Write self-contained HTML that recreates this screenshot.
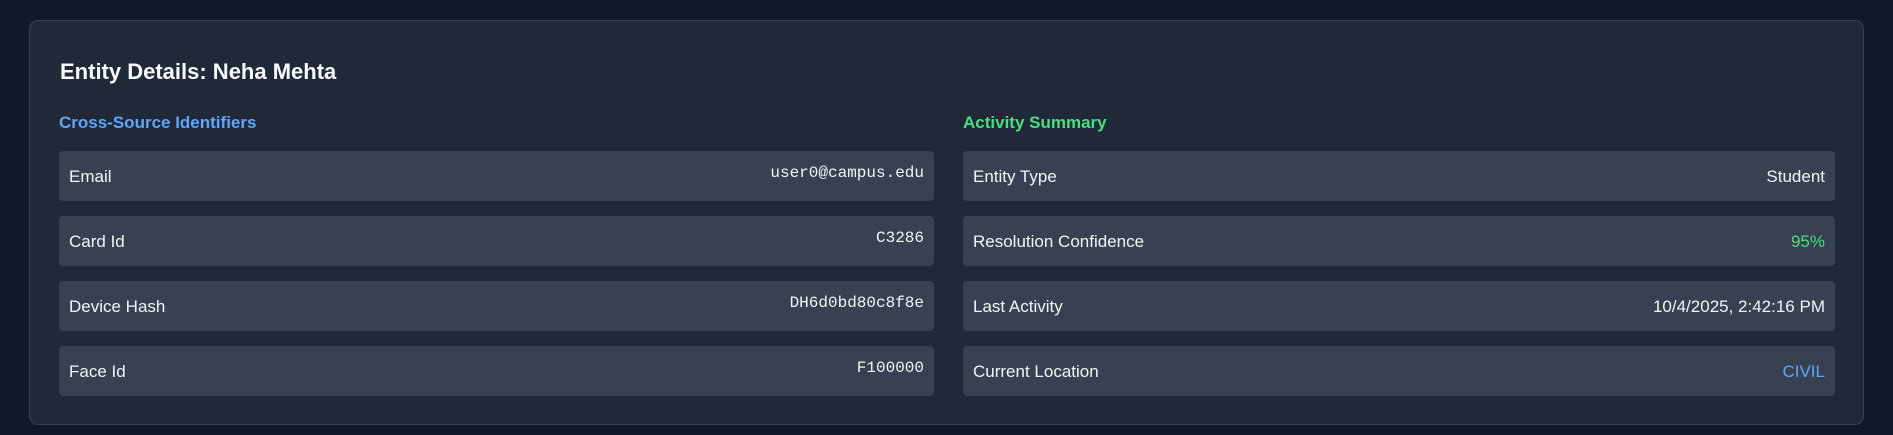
<!DOCTYPE html>
<html><head><meta charset="utf-8"><style>
html,body{margin:0;padding:0;}
body{width:1893px;height:435px;background:#111827;font-family:"Liberation Sans",sans-serif;color:#f3f4f6;position:relative;overflow:hidden;}
.card{position:absolute;left:29px;top:20px;width:1835px;height:405px;background:#1f2937;border:1px solid #374151;border-radius:9px;box-sizing:border-box;}
h1{position:absolute;left:30px;top:38px;margin:0;font-size:22px;font-weight:bold;color:#f9fafb;}
.col{position:absolute;top:91px;}
.col h2{margin:0;font-size:17px;font-weight:bold;height:39px;line-height:22px;}
.row{height:50px;background:#374151;border-radius:4px;margin-bottom:15px;display:flex;justify-content:space-between;align-items:center;padding:2px 10px 0;box-sizing:border-box;font-size:17px;}
.mono{font-family:"Liberation Mono",monospace;font-size:16px;position:relative;top:-4px;}
</style></head><body>
<div class="card">
<h1>Entity Details: Neha Mehta</h1>
<div class="col" style="left:29px;width:875px;">
<h2 style="color:#60a5fa">Cross-Source Identifiers</h2>
<div class="row"><span>Email</span><span class="mono">user0@campus.edu</span></div>
<div class="row"><span>Card Id</span><span class="mono">C3286</span></div>
<div class="row"><span>Device Hash</span><span class="mono">DH6d0bd80c8f8e</span></div>
<div class="row"><span>Face Id</span><span class="mono">F100000</span></div>
</div>
<div class="col" style="left:933px;width:872px;">
<h2 style="color:#4ade80">Activity Summary</h2>
<div class="row"><span>Entity Type</span><span>Student</span></div>
<div class="row"><span>Resolution Confidence</span><span style="color:#4ade80">95%</span></div>
<div class="row"><span>Last Activity</span><span>10/4/2025, 2:42:16 PM</span></div>
<div class="row"><span>Current Location</span><span style="color:#60a5fa">CIVIL</span></div>
</div>
</div>
</body></html>
